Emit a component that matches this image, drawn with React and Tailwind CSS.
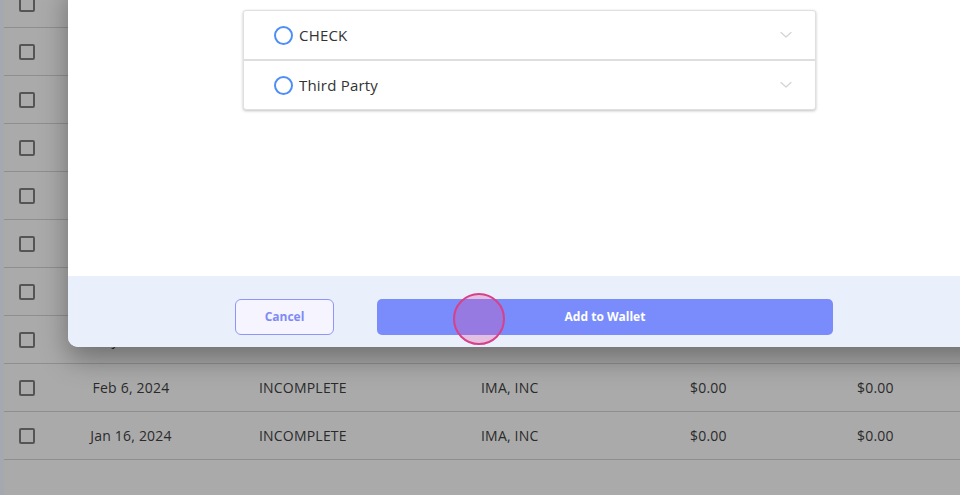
import React from "react";

const rows = [
  { date: "Mar 4, 2024", status: "INCOMPLETE", client: "IMA, INC", a: "$0.00", b: "$0.00" },
  { date: "Mar 1, 2024", status: "INCOMPLETE", client: "IMA, INC", a: "$0.00", b: "$0.00" },
  { date: "Feb 28, 2024", status: "INCOMPLETE", client: "IMA, INC", a: "$0.00", b: "$0.00" },
  { date: "Feb 26, 2024", status: "INCOMPLETE", client: "IMA, INC", a: "$0.00", b: "$0.00" },
  { date: "Feb 22, 2024", status: "INCOMPLETE", client: "IMA, INC", a: "$0.00", b: "$0.00" },
  { date: "Feb 20, 2024", status: "INCOMPLETE", client: "IMA, INC", a: "$0.00", b: "$0.00" },
  { date: "Feb 14, 2024", status: "INCOMPLETE", client: "IMA, INC", a: "$0.00", b: "$0.00" },
  { date: "May 2, 2024", status: "INCOMPLETE", client: "IMA, INC", a: "$0.00", b: "$0.00" },
  { date: "Feb 6, 2024", status: "INCOMPLETE", client: "IMA, INC", a: "$0.00", b: "$0.00" },
  { date: "Jan 16, 2024", status: "INCOMPLETE", client: "IMA, INC", a: "$0.00", b: "$0.00" },
];

function Chevron() {
  return (
    <svg width="12" height="8" viewBox="0 0 12 8" fill="none">
      <path d="M1 1.5L6 6L11 1.5" stroke="#d4d4d8" strokeWidth="1.3" strokeLinecap="round" strokeLinejoin="round" />
    </svg>
  );
}

function AccRow({ label, last }) {
  return (
    <div className={`flex items-center h-[48px] pl-[30px] pr-[23px] ${last ? "" : "border-b-2 border-[#dedede] box-content"}`}>
      <span className="w-[19px] h-[19px] rounded-full border-2 border-[#4f8ef7] shrink-0" />
      <span className="ml-[6px] text-[15px] tracking-[0.2px] text-[#333333] flex-1">{label}</span>
      <Chevron />
    </div>
  );
}

export default function App() {
  return (
    <div
      className="relative w-[960px] h-[495px] overflow-hidden bg-[#a5a8ae] pl-[4px]"
      style={{ fontFamily: '"Open Sans", "Noto Sans", sans-serif' }}
    >
      <div className="h-full bg-[#aaaaaa] flex flex-col overflow-hidden">
        <div className="-mt-[20px]">
          {rows.map((r, i) => (
            <div key={i} className="flex items-center h-[48px] border-b border-[#8f8f8f] text-[14px] tracking-[0.2px] text-[#2a2a2a]">
              <div className="w-[46px] pl-[15px] flex items-center">
                <span className="w-[16px] h-[16px] border-2 border-[#555555] rounded-[2px]" />
              </div>
              <div className="w-[162px] text-center">{r.date}</div>
              <div className="w-[222px] pl-[47px]">{r.status}</div>
              <div className="w-[209px] pl-[47px]">{r.client}</div>
              <div className="w-[214px] pl-[47px]">{r.a}</div>
              <div>{r.b}</div>
            </div>
          ))}
        </div>
      </div>

      {/* Modal */}
      <div className="absolute left-[68px] top-[-20px] w-[923px] h-[367px] rounded-[10px] bg-white flex flex-col overflow-hidden shadow-[0_12px_28px_rgba(0,0,0,0.35)]">
        <div className="flex-1 pt-[30px]">
          <div className="ml-[175px] w-[573px] bg-white border border-[#e0e0e0] rounded-[3px] shadow-[0_1px_3px_rgba(0,0,0,0.25)]">
            <AccRow label="CHECK" />
            <AccRow label="Third Party" last />
          </div>
        </div>
        <div className="h-[71px] bg-[#e9f0fb] flex items-start pt-[23px] pl-[167px]">
          <button className="w-[99px] h-[36px] rounded-[6px] border border-[#8e96fa] bg-[#f6f4ff] text-[12px] font-bold text-[#7e8bf6]">
            Cancel
          </button>
          <button className="ml-[43px] w-[456px] h-[36px] rounded-[5px] bg-[#7a8cfb] text-[12px] font-bold text-white">
            Add to Wallet
          </button>
        </div>
      </div>

      {/* Click indicator */}
      <div className="absolute left-[453px] top-[293px] w-[52px] h-[52px] rounded-full border-2 border-[#d8418a] bg-[rgba(215,80,165,0.3)]" />
    </div>
  );
}
